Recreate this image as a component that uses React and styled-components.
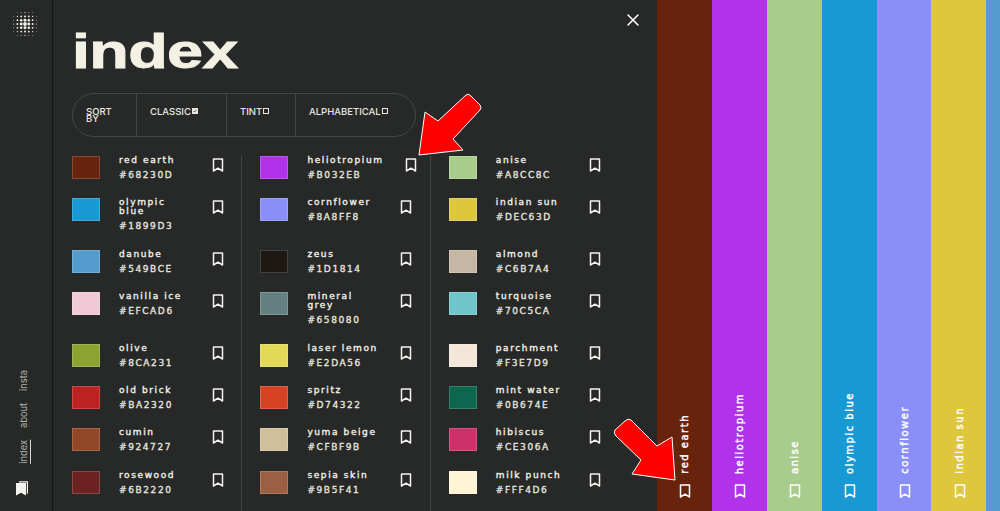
import React from 'react';
import styled, { createGlobalStyle } from 'styled-components';
import { X } from 'lucide-react';

const GlobalStyle = createGlobalStyle`
  html, body {
    margin: 0;
    height: 100%;
    background: #272928;
    overflow: hidden;
  }
`;

const colors = [
  ['red earth', '#68230D'], ['heliotropium', '#B032EB'], ['anise', '#A8CC8C'],
  ['olympic blue', '#1899D3'], ['cornflower', '#8A8FF8'], ['indian sun', '#DEC63D'],
  ['danube', '#549BCE'], ['zeus', '#1D1814'], ['almond', '#C6B7A4'],
  ['vanilla ice', '#EFCAD6'], ['mineral grey', '#658080'], ['turquoise', '#70C5CA'],
  ['olive', '#8CA231'], ['laser lemon', '#E2DA56'], ['parchment', '#F3E7D9'],
  ['old brick', '#BA2320'], ['spritz', '#D74322'], ['mint water', '#0B674E'],
  ['cumin', '#924727'], ['yuma beige', '#CFBF9B'], ['hibiscus', '#CE306A'],
  ['rosewood', '#6B2220'], ['sepia skin', '#9B5F41'], ['milk punch', '#FFF4D6'],
];

const strips = [
  ['red earth', '#68230D'], ['heliotropium', '#B032EB'], ['anise', '#A8CC8C'],
  ['olympic blue', '#1899D3'], ['cornflower', '#8A8FF8'], ['indian sun', '#DEC63D'],
];

const Page = styled.div`
  position: relative;
  display: flex;
  height: 511px;
  width: 1000px;
  overflow: hidden;
  font-family: 'DejaVu Sans', sans-serif;
  color: #f3f1e7;
`;

const Sidebar = styled.aside`
  flex: 0 0 39px;
  border-right: 1px solid #141515;
  display: flex;
  flex-direction: column;
  align-items: flex-start;
  padding: 12px 0 15px 13px;
`;

const SideNav = styled.nav`
  margin-top: auto;
  margin-left: 5px;
  margin-bottom: 16px;
  display: flex;
  flex-direction: column;
  align-items: flex-start;
  gap: 12px;
`;

const SideLink = styled.a`
  writing-mode: vertical-rl;
  transform: rotate(180deg);
  font-family: 'Inter', sans-serif;
  font-size: 9.3px;
  line-height: 12px;
  color: #b4b4ae;
  border-left: ${(props) => (props.$active ? '1px solid #d8d8d0' : '0 solid transparent')};
`;

const Stack = styled.svg`
  margin-left: 2px;
`;

const Panel = styled.main`
  position: relative;
  flex: 0 0 604px;
  display: flex;
  flex-direction: column;
`;

const Title = styled.h1`
  flex: none;
  margin: 27px 0 0 19px;
  height: 47px;
  font-family: 'Liberation Sans', sans-serif;
  font-weight: 700;
  font-size: 49px;
  line-height: 49px;
  letter-spacing: -0.5px;
  color: #f3f1e4;
  transform: scaleX(1.32);
  transform-origin: left top;
  -webkit-text-stroke: 0.9px #f3f1e4;
`;

const CloseButton = styled.button`
  position: absolute;
  top: 10px;
  right: 14px;
  width: 20px;
  height: 20px;
  padding: 0;
  border: 0;
  background: none;
  color: #fff;
  display: flex;
`;

const SortBar = styled.div`
  flex: none;
  align-self: flex-start;
  margin: 19px 0 0 19px;
  display: flex;
  height: 42px;
  border: 1px solid #444645;
  border-radius: 22px;
  font-family: 'Inter', sans-serif;
  font-weight: 500;
  font-size: 9.5px;
  line-height: 7px;
  color: #e8e8e2;
  text-transform: uppercase;
`;

const SortCell = styled.div`
  width: ${(props) => props.$width}px;
  padding: 14px 0 0 ${(props) => props.$pad}px;
  box-sizing: border-box;
  border-right: ${(props) => (props.$last ? '0' : '1px solid #444645')};
  display: flex;
  align-items: flex-start;
`;

const Check = styled.span`
  width: 6px;
  height: 6px;
  margin: 0 0 0 1px;
  box-sizing: border-box;
  border: 1px solid #e8e8e2;
  background: ${(props) => (props.$on ? '#e8e8e2' : 'transparent')};
  display: flex;
`;

const Grid = styled.div`
  flex: none;
  margin: 19px 0 0 1px;
  display: grid;
  grid-template-columns: repeat(3, 188.4px);
  grid-auto-rows: min-content;
`;

const Cell = styled.div`
  display: flex;
  align-items: flex-start;
  padding: 0 0 17.4px 18px;
  border-right: ${(props) => (props.$divider ? '1px solid #444645' : '0')};
`;

const Swatch = styled.div`
  flex: 0 0 28px;
  height: 23px;
  box-sizing: border-box;
  border: 1px solid rgba(255, 255, 255, 0.18);
  background: ${(props) => props.$color};
  margin-right: 19px;
`;

const Info = styled.div`
  flex: 0 0 72px;
  margin-right: 21px;
  font-weight: 400;
  font-size: 9px;
  letter-spacing: 1.6px;
  -webkit-text-stroke: 0.35px currentColor;
`;

const Name = styled.div`
  line-height: 9px;
`;

const Hex = styled.div`
  line-height: 12px;
  margin-top: 4px;
  color: #e4e4de;
`;

const Mark = styled.svg`
  flex: none;
  width: 12px;
  height: 14px;
  margin-top: 2px;
  fill: none;
  stroke: ${(props) => props.$stroke || '#f3f3ee'};
  stroke-width: 1.5;
`;

const Strip = styled.section`
  flex: ${(props) => (props.$fill ? '1' : '0 0 54.9px')};
  background: ${(props) => props.$color};
  box-sizing: border-box;
  padding: 0 0 13px 2px;
  display: flex;
  flex-direction: column;
  justify-content: flex-end;
  align-items: center;
`;

const StripLabel = styled.span`
  writing-mode: vertical-rl;
  transform: rotate(180deg);
  font-weight: 400;
  font-size: 10px;
  line-height: 12px;
  letter-spacing: 1.5px;
  -webkit-text-stroke: 0.4px #fff;
  color: #fff;
  margin-bottom: 8px;
`;

const Arrow = styled.svg`
  position: absolute;
  left: 0;
  top: 0;
  width: 1000px;
  height: 511px;
  pointer-events: none;
`;

function Bookmark({ stroke }) {
  return (
    <Mark viewBox="0 0 12 14" $stroke={stroke}>
      <path d="M1.5 1h9v12L6 10.2 1.5 13z" strokeLinejoin="round" />
    </Mark>
  );
}

function Logo() {
  const dots = [];
  for (let y = -3; y <= 3; y += 1) {
    for (let x = -3; x <= 3; x += 1) {
      const dist = Math.hypot(x, y);
      if (dist <= 3.7) {
        dots.push(<circle key={`${x}${y}`} cx={12 + x * 3.8} cy={12 + y * 3.8} r={Math.max(0.4, 1.9 - dist * 0.45)} fill="#f3f1e7" />);
      }
    }
  }
  return (
    <svg width="24" height="24" viewBox="0 0 24 24">
      {dots}
    </svg>
  );
}

function App() {
  return (
    <Page>
      <GlobalStyle />
      <Sidebar>
        <Logo />
        <SideNav>
          <SideLink>insta</SideLink>
          <SideLink>about</SideLink>
          <SideLink $active>index</SideLink>
        </SideNav>
        <Stack width="14" height="16" viewBox="0 0 14 16">
          <path d="M4 2.5V1.2h9V14l-1.2-.8V2.5z" fill="#f3f3ee" />
          <path d="M1 3h10v12.5l-5-2.7-5 2.7z" fill="#f3f3ee" />
        </Stack>
      </Sidebar>
      <Panel>
        <Title>index</Title>
        <CloseButton type="button">
          <X size={20} strokeWidth={1.8} />
        </CloseButton>
        <SortBar>
          <SortCell $width={64} $pad={13}>Sort<br />by</SortCell>
          <SortCell $width={90} $pad={13}>Classic<Check $on><svg width="4" height="4" viewBox="0 0 4 4"><path d="M.5 2l1 1L3.5 .8" fill="none" stroke="#272928" strokeWidth=".8" /></svg></Check></SortCell>
          <SortCell $width={69} $pad={13}>Tint<Check /></SortCell>
          <SortCell $width={119} $pad={13} $last>Alphabetical<Check /></SortCell>
        </SortBar>
        <Grid>
          {colors.map(([name, hex], index) => (
            <Cell key={hex} $divider={index % 3 !== 2}>
              <Swatch $color={hex} />
              <Info>
                <Name>{name}</Name>
                <Hex>{hex}</Hex>
              </Info>
              <Bookmark />
            </Cell>
          ))}
        </Grid>
      </Panel>
      {strips.map(([name, hex]) => (
        <Strip key={hex} $color={hex}>
          <StripLabel>{name}</StripLabel>
          <Bookmark stroke="#fff" />
        </Strip>
      ))}
      <Strip $fill $color="#549BCE" />
      <Arrow viewBox="0 0 1000 511">
        <path d="M419 155L425 112L438 121L466 95Q468 93 471 96L480 105Q482 108 480 110L453 139L463 150Z" fill="#f00" stroke="#fff" strokeWidth="1" strokeLinejoin="round" />
        <path d="M675 480L672 437L657 446L631 420Q628 418 625 421L615 430Q613 433 616 436L641 460L632 474Z" fill="#f00" stroke="#fff" strokeWidth="1" strokeLinejoin="round" />
      </Arrow>
    </Page>
  );
}

export default App;
